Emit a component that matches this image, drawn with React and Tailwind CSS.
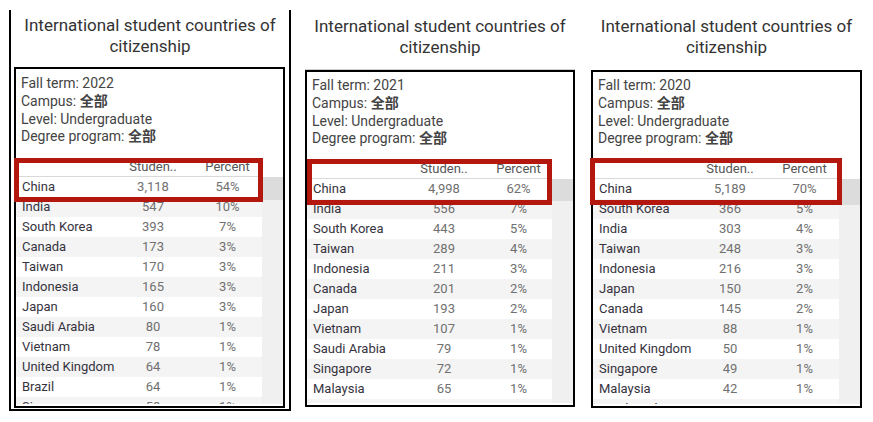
import React from "react";

const P1 = [
  ["China", "3,118", "54%"],
  ["India", "547", "10%"],
  ["South Korea", "393", "7%"],
  ["Canada", "173", "3%"],
  ["Taiwan", "170", "3%"],
  ["Indonesia", "165", "3%"],
  ["Japan", "160", "3%"],
  ["Saudi Arabia", "80", "1%"],
  ["Vietnam", "78", "1%"],
  ["United Kingdom", "64", "1%"],
  ["Brazil", "64", "1%"],
  ["Singapore", "58", "1%"],
];

const P2 = [
  ["China", "4,998", "62%"],
  ["India", "556", "7%"],
  ["South Korea", "443", "5%"],
  ["Taiwan", "289", "4%"],
  ["Indonesia", "211", "3%"],
  ["Canada", "201", "2%"],
  ["Japan", "193", "2%"],
  ["Vietnam", "107", "1%"],
  ["Saudi Arabia", "79", "1%"],
  ["Singapore", "72", "1%"],
  ["Malaysia", "65", "1%"],
  ["United Kingdom", "61", "1%"],
];

const P3 = [
  ["China", "5,189", "70%"],
  ["South Korea", "366", "5%"],
  ["India", "303", "4%"],
  ["Taiwan", "248", "3%"],
  ["Indonesia", "216", "3%"],
  ["Japan", "150", "2%"],
  ["Canada", "145", "2%"],
  ["Vietnam", "88", "1%"],
  ["United Kingdom", "50", "1%"],
  ["Singapore", "49", "1%"],
  ["Malaysia", "42", "1%"],
  ["Saudi Arabia", "38", "1%"],
];

function Title() {
  return (
    <div className="text-center text-[17px] leading-[21px] text-[#333]">
      International student countries of
      <br />
      citizenship
    </div>
  );
}

function Info({ year, pad }) {
  return (
    <div className={`${pad} pl-[5px] text-[14px] leading-[17.8px] text-[#444]`}>
      <div>Fall term: {year}</div>
      <div>
        Campus: <span className="font-bold">全部</span>
      </div>
      <div>Level: Undergraduate</div>
      <div>
        Degree program: <span className="font-bold">全部</span>
      </div>
    </div>
  );
}

function Table({ rows, thumb }) {
  return (
    <div className="flex flex-1 overflow-hidden pb-[2px]">
      <div className="w-[247px] overflow-hidden">
        <div className="grid grid-cols-[98px_78px_71px] h-[20px] border-b border-[#d9d9d9] text-[13px] leading-[19px] text-[#555]">
          <div />
          <div className="text-center">Studen..</div>
          <div className="text-center">Percent</div>
        </div>
        {rows.map((r, i) => (
          <div
            key={i}
            className={`grid grid-cols-[98px_78px_71px] h-[20px] text-[13px] leading-[20px] ${
              i % 2 ? "bg-[#f4f4f4]" : "bg-white"
            }`}
          >
            <div className="pl-[6px] whitespace-nowrap text-[#363340]">{r[0]}</div>
            <div className="text-center text-[#707070]">{r[1]}</div>
            <div className="text-center text-[#707070]">{r[2]}</div>
          </div>
        ))}
      </div>
      <div className="flex w-[21px] flex-col pt-[20px]">
        <div className="bg-[#dcdcdc]" style={{ height: thumb }} />
        <div className="flex-1 bg-[#f0f0f0]" />
      </div>
    </div>
  );
}

export default function App() {
  return (
    <div className="flex h-[422px] w-[873px] items-start bg-white font-['Roboto','Noto_Sans_CJK_SC',sans-serif]">
      {/* Panel 1 */}
      <div className="ml-[9px] mt-[10px] h-[401px] w-[282px] border-x-2 border-b-2 border-black pt-[5px]">
        <Title />
        <div className="relative ml-[3px] mt-[10px] flex h-[341px] w-[271px] flex-col border-2 border-black">
          <div className="h-[88px]">
            <Info year="2022" pad="pt-[6px]" />
          </div>
          <Table rows={P1} thumb={23} />
          <div className="absolute left-[-2px] top-[89px] h-[44px] w-[249px] border-[5px] border-[#b3170d]" />
        </div>
      </div>

      {/* Panel 2 */}
      <div className="ml-[14px] w-[270px] pt-[16px]">
        <Title />
        <div className="relative mt-[12px] flex h-[337px] w-[270px] flex-col border-2 border-black shadow-[0_-1px_0_#cfcfcf]">
          <div className="h-[87px]">
            <Info year="2021" pad="pt-[5px]" />
          </div>
          <Table rows={P2} thumb={22} />
          <div className="absolute left-0 top-[87px] h-[46px] w-[245px] border-[5px] border-[#b3170d]" />
        </div>
      </div>

      {/* Panel 3 */}
      <div className="ml-[16px] w-[271px] pt-[16px]">
        <Title />
        <div className="relative mt-[12px] flex h-[338px] w-[271px] flex-col border-2 border-black">
          <div className="h-[87px]">
            <Info year="2020" pad="pt-[5px]" />
          </div>
          <Table rows={P3} thumb={26} />
          <div className="absolute left-[-3px] top-[86px] h-[47px] w-[252px] border-[5px] border-[#b3170d]" />
        </div>
      </div>
    </div>
  );
}
